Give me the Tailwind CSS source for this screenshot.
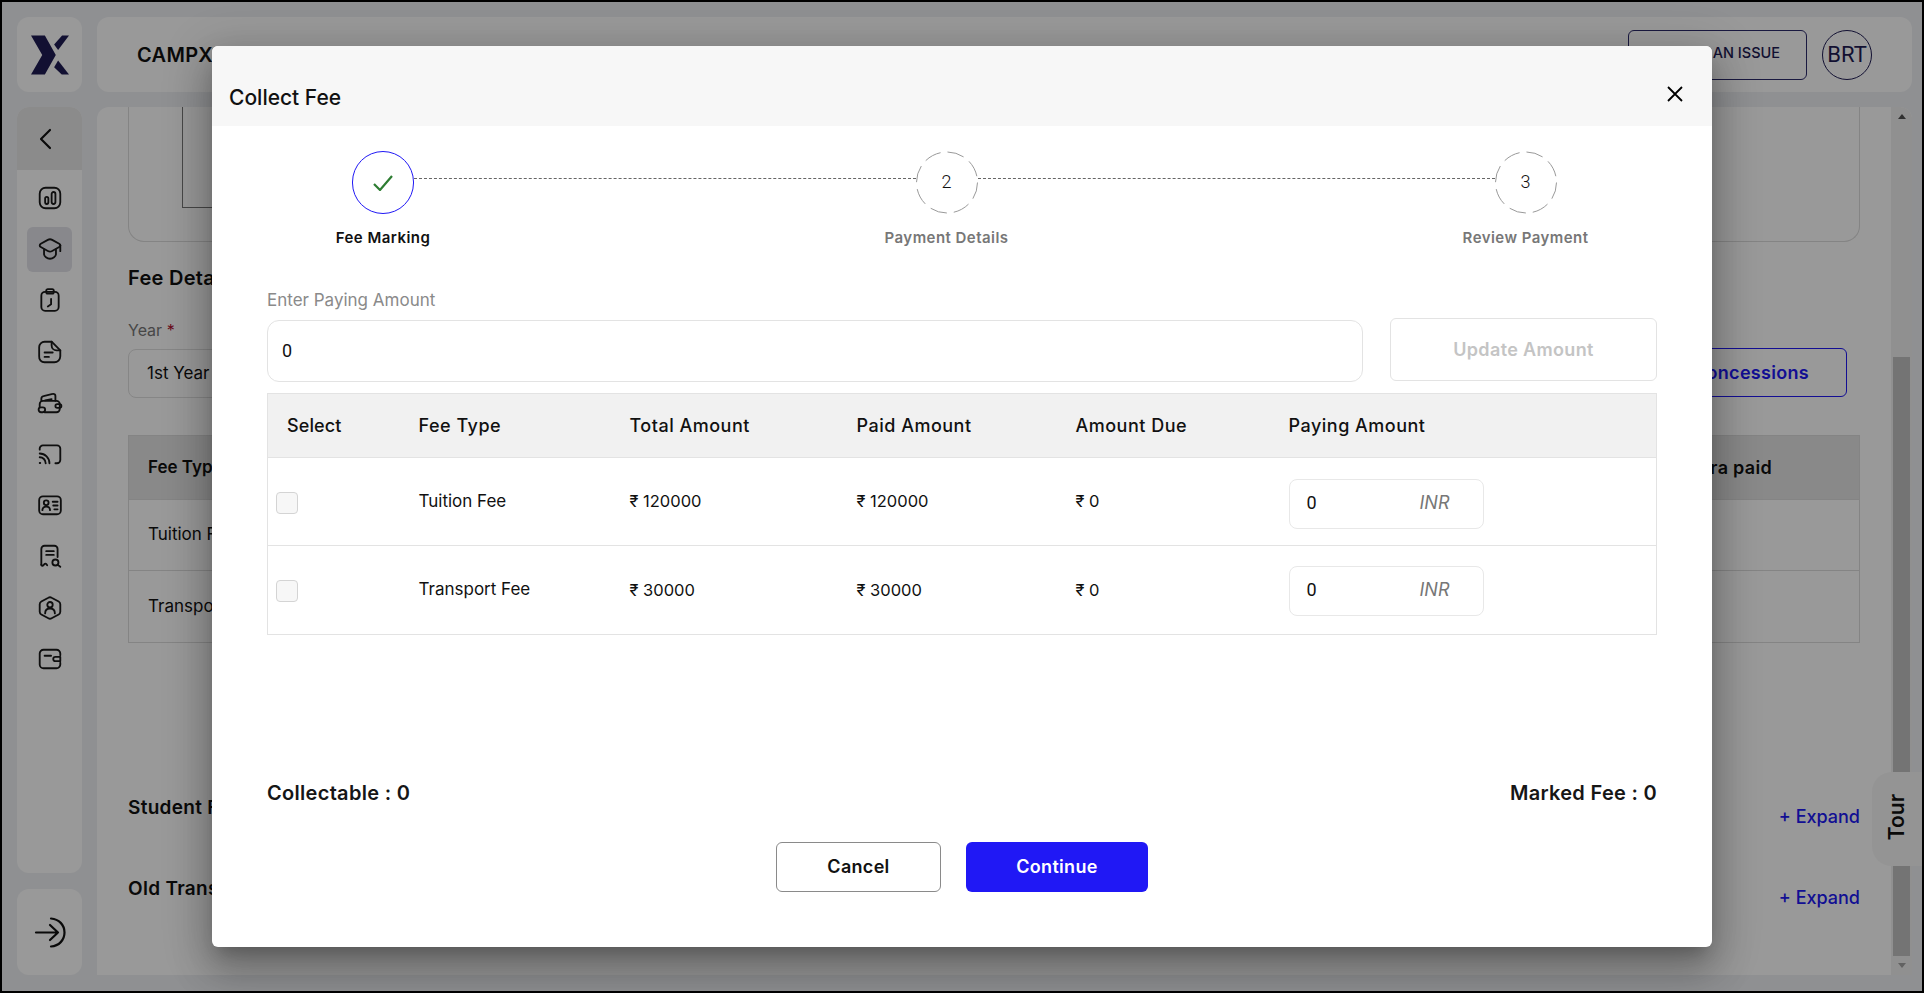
<!DOCTYPE html>
<html lang="en">

<head>
    <meta charset="UTF-8">
    <title>Collect Fee</title>
    <script src="https://cdn.jsdelivr.net/npm/@tailwindcss/browser@4"></script>
</head>

<body class="font-['Inter',sans-serif]">
    <div class="relative w-[1924px] h-[993px] overflow-hidden border-2 border-black bg-[#eff1f4] box-border">
        <div class="grid grid-cols-[65px_1815px] grid-rows-[75px_868px] gap-x-[15px] gap-y-[15px] pl-[15px] pt-[15px]">

            <!-- logo -->
            <div class="bg-white rounded-xl flex items-center justify-center">
                <svg class="w-[38px] h-[40px]" viewBox="0 0 115 118" fill="#1f1c54">
                    <polygon points="0,0 42,0 75,59 42,118 0,118 34,59" />
                    <polygon points="70,27 94,0 115,0 82,44" />
                    <polygon points="82,76 115,118 93,118 70,96" />
                </svg>
            </div>

            <!-- top bar -->
            <div class="bg-white rounded-xl flex items-center justify-between pl-[40px] pr-[40px]">
                <span class="text-[20px] font-semibold text-[#121212] tracking-[0.3px]">CAMPX</span>
                <div class="flex items-center gap-[15px]">
                    <button class="w-[179px] h-[50px] border border-[#2c2a6b] rounded-md text-[14.500px] font-medium text-[#1f1c54] text-right pr-[26px] pb-[3px] whitespace-nowrap">REPORT AN ISSUE</button>
                    <div class="w-[50px] h-[50px] rounded-full border border-[#1f1c54] flex items-center justify-center text-[22px] font-['Roboto',sans-serif] text-[#1f1c54]">BRT</div>
                </div>
            </div>

            <!-- sidebar -->
            <div class="flex flex-col gap-[16px] h-[868px]">
                <div class="bg-white rounded-xl flex-1 overflow-hidden">
                    <div class="h-[63px] bg-[#e8e8e8] flex items-center pl-[21px]">
                        <svg class="w-[14px] h-[22px]" viewBox="0 0 14 22" fill="none" stroke="#111" stroke-width="2.200" stroke-linecap="round" stroke-linejoin="round"><path d="M12 2 3 11l9 9" /></svg>
                    </div>
                    <div class="flex flex-col items-center gap-[6.200px] pt-[5.500px] text-[#1a1a1a]">
                        <div class="w-[45px] h-[45px] flex items-center justify-center">
                            <svg class="w-[26px] h-[26px]" viewBox="0 0 24 24" fill="none" stroke="currentColor" stroke-width="1.700"><rect x="2.500" y="2.500" width="19" height="19" rx="5.500" /><rect x="7.500" y="11" width="3" height="6.500" rx="1.500" /><rect x="13.500" y="6.500" width="3.500" height="11" rx="1.750" /></svg>
                        </div>
                        <div class="w-[45px] h-[45px] rounded-md bg-[#e3e3ea] flex items-center justify-center">
                            <svg class="w-[26px] h-[26px]" viewBox="0 0 24 24" fill="none" stroke="currentColor" stroke-width="1.700" stroke-linecap="round" stroke-linejoin="round"><path d="M10 3.600a4 4 0 0 1 4 0l6.500 3.600c1.300.8 1.300 2.300 0 3l-6.500 3.600a4 4 0 0 1-4 0L3.500 10.200c-1.300-.7-1.300-2.200 0-3z" /><path d="M6.500 12.500v4c0 2.500 2.800 4.500 5.500 4.500s5.500-2 5.500-4.500v-4" /><path d="M21.500 8.500v5.500" /></svg>
                        </div>
                        <div class="w-[45px] h-[45px] flex items-center justify-center">
                            <svg class="w-[26px] h-[26px]" viewBox="0 0 24 24" fill="none" stroke="currentColor" stroke-width="1.700" stroke-linecap="round" stroke-linejoin="round"><rect x="4" y="4.500" width="16" height="17.500" rx="3.500" /><rect x="8.500" y="2" width="7" height="4" rx="1.500" /><path d="M13 11v5l-3 2" /></svg>
                        </div>
                        <div class="w-[45px] h-[45px] flex items-center justify-center">
                            <svg class="w-[26px] h-[26px]" viewBox="0 0 24 24" fill="none" stroke="currentColor" stroke-width="1.700" stroke-linecap="round" stroke-linejoin="round"><path d="M7 2.500h6.500l8 8V16a5.500 5.500 0 0 1-5.500 5.500H7A5 5 0 0 1 2 16V7.500a5 5 0 0 1 5-5z" /><path d="M13.500 2.500V6a4.500 4.500 0 0 0 4.500 4.500h3.500" /><path d="M7 12.500h7.500M7 16.500h4" /></svg>
                        </div>
                        <div class="w-[45px] h-[45px] flex items-center justify-center">
                            <svg class="w-[26px] h-[26px]" viewBox="0 0 24 24" fill="none" stroke="currentColor" stroke-width="1.700" stroke-linecap="round" stroke-linejoin="round"><path d="M7 20.500h11a3 3 0 0 0 3-3v-4.500a3 3 0 0 0-3-3H5.500A3 3 0 0 0 2.500 13v3" /><path d="M4 10V8a2.500 2.500 0 0 1 2-2.400l8.500-2a2 2 0 0 1 2.500 2V10" /><path d="M7.500 9.500l6-1" /><rect x="1.500" y="16" width="6" height="4.500" rx="2.200" /><rect x="17" y="13" width="5.500" height="3.500" rx="1.700" /></svg>
                        </div>
                        <div class="w-[45px] h-[45px] flex items-center justify-center">
                            <svg class="w-[26px] h-[26px]" viewBox="0 0 24 24" fill="none" stroke="currentColor" stroke-width="1.700" stroke-linecap="round" stroke-linejoin="round"><path d="M2.500 8V7a3 3 0 0 1 3-3H18.500a3 3 0 0 1 3 3v10.500a3 3 0 0 1-3 3H17" /><path d="M2.500 11.500a9 9 0 0 1 9 9M2.500 15a5.500 5.500 0 0 1 5.500 5.500M2.500 20.300h.5" /></svg>
                        </div>
                        <div class="w-[45px] h-[45px] flex items-center justify-center">
                            <svg class="w-[26px] h-[26px]" viewBox="0 0 24 24" fill="none" stroke="currentColor" stroke-width="1.700" stroke-linecap="round" stroke-linejoin="round"><rect x="2" y="4" width="20" height="16.500" rx="3.500" /><circle cx="8.500" cy="10" r="2.200" /><path d="M5 16.800c0-2.300 1.500-3.300 3.500-3.300s3.500 1 3.500 3.300" /><path d="M14.500 9h4.500M15 12.500h4M16 16h3" /></svg>
                        </div>
                        <div class="w-[45px] h-[45px] flex items-center justify-center">
                            <svg class="w-[26px] h-[26px]" viewBox="0 0 24 24" fill="none" stroke="currentColor" stroke-width="1.700" stroke-linecap="round" stroke-linejoin="round"><path d="M4 20V5.500a3 3 0 0 1 3-3h9a3 3 0 0 1 3 3V13" /><path d="M4 20c0 1.200 1.300 1.300 2 .5l.8-1c.5-.6 1.300-.6 1.800 0l.8 1" /><path d="M8.500 7.500h7M8.500 11h7" /><circle cx="17" cy="18" r="2.800" /><path d="M19.200 20.200 21.500 22" /></svg>
                        </div>
                        <div class="w-[45px] h-[45px] flex items-center justify-center">
                            <svg class="w-[26px] h-[26px]" viewBox="0 0 24 24" fill="none" stroke="currentColor" stroke-width="1.700" stroke-linecap="round" stroke-linejoin="round"><path d="M10.500 2.500a3 3 0 0 1 3 0l6.500 3.500a3 3 0 0 1 1.500 2.500v7a3 3 0 0 1-1.500 2.500l-6.500 3.500a3 3 0 0 1-3 0L4 18a3 3 0 0 1-1.500-2.500v-7A3 3 0 0 1 4 6z" /><circle cx="12" cy="9" r="2.500" /><path d="M7.500 17c0-3 2-4.500 4.500-4.500s4.500 1.500 4.500 4.500" /></svg>
                        </div>
                        <div class="w-[45px] h-[45px] flex items-center justify-center">
                            <svg class="w-[26px] h-[26px]" viewBox="0 0 24 24" fill="none" stroke="currentColor" stroke-width="1.700" stroke-linecap="round" stroke-linejoin="round"><path d="M21.500 8.500V7a3.500 3.500 0 0 0-3.500-3.500H6A3.500 3.500 0 0 0 2.500 7v10A3.500 3.500 0 0 0 6 20.500h12a3.500 3.500 0 0 0 3.500-3.500v-1.500" /><path d="M17 10h4.500v4H17a2 2 0 0 1 0-4z" /><path d="M7 9h6" /></svg>
                        </div>
                    </div>
                </div>
                <div class="bg-white rounded-xl h-[86px] flex items-center justify-center">
                    <svg class="w-[32px] h-[31px]" viewBox="0 0 32 31" fill="none" stroke="#111" stroke-width="2.200" stroke-linecap="round" stroke-linejoin="round"><path d="M2 15.500h22M16 8l8 7.500L16 23" /><path d="M17 1.500c8 .5 13.500 6.500 13.500 14S25 29 17 29.500" /></svg>
                </div>
            </div>

            <!-- main content -->
            <div class="relative bg-white rounded-t-xl overflow-hidden flex h-[868px]">
                <div class="flex-1 px-[31px]">
                    <div class="h-[135px] rounded-b-2xl border border-t-0 border-[#dcdcdc]">
                        <div class="ml-[53px] h-[101px] w-[900px] border-l border-b border-[#777]"></div>
                    </div>
                    <h2 class="mt-[21px] text-[20px] leading-[30px] font-semibold text-[#121212] tracking-[0.3px]">Fee Details</h2>
                    <div class="mt-[25px] flex items-end justify-between">
                        <div>
                            <label class="block text-[16px] leading-[24px] text-[#777]">Year <span class="text-[#b01030]">*</span></label>
                            <div class="mt-[7px] w-[300px] h-[49px] border border-[#e0e0e0] rounded-lg flex items-center pl-[18px] text-[17px] text-[#111]">1st Year</div>
                        </div>
                        <button class="mr-[13px] mb-[1px] w-[200px] h-[49px] border border-[#2018f5] rounded-md text-[18px] font-semibold text-[#2018f5] text-right pr-[37px] tracking-[0.3px]">Concessions</button>
                    </div>
                    <div class="mt-[37px] border border-[#dcdcdc]">
                        <div class="h-[64px] bg-[#e5e5e5] border-b border-[#dcdcdc] flex items-center justify-between pl-[19px] pr-[87px] text-[17px] font-semibold text-[#111]">
                            <span>Fee Type</span><span class="text-[18px] tracking-[0.3px]">Extra paid</span>
                        </div>
                        <div class="h-[71px] border-b border-[#dcdcdc] flex items-center pl-[19px] text-[17px] text-[#111]">Tuition Fee</div>
                        <div class="h-[71px] flex items-center pl-[19px] text-[17px] text-[#111]">Transport Fee</div>
                    </div>
                    <div class="mt-[150px] flex justify-between items-start">
                        <h3 class="text-[19px] leading-[30px] font-semibold text-[#121212] tracking-[0.3px]">Student Fee</h3>
                        <span class="mt-[9px] text-[18px] leading-[30px] font-medium text-[#2018f5]">+ Expand</span>
                    </div>
                    <div class="mt-[42px] flex justify-between items-start">
                        <h3 class="text-[19px] leading-[30px] font-semibold text-[#121212] tracking-[0.3px]">Old Transactions</h3>
                        <span class="mt-[9px] text-[18px] leading-[30px] font-medium text-[#2018f5]">+ Expand</span>
                    </div>
                </div>
                <!-- scrollbar -->
                <div class="w-[21px] bg-[#f1f1f1] flex flex-col items-center justify-between py-[7px]">
                    <div class="w-0 h-0 border-x-[4px] border-x-transparent border-b-[5px] border-b-[#505050]"></div>
                    <div class="w-[17px] h-[599px] mt-[231px] bg-[#c1c1c1]"></div>
                    <div class="w-0 h-0 border-x-[4px] border-x-transparent border-t-[5px] border-t-[#a3a3a3]"></div>
                </div>
            </div>
        </div>

        <!-- tour tab -->
        <div class="absolute right-0 top-[770px] w-[50px] h-[94px] bg-[#f7f7f7] rounded-l-[20px] flex items-center justify-center">
            <span class="[writing-mode:vertical-rl] rotate-180 text-[21px] font-semibold text-[#111] mb-[4px]">Tour</span>
        </div>

        <!-- modal overlay -->
        <div class="absolute inset-0 bg-black/40 flex items-center justify-center">
            <div class="w-[1500px] h-[901px] bg-white rounded-md overflow-hidden flex flex-col shadow-[0_11px_15px_-7px_rgba(0,0,0,0.2),0_24px_38px_3px_rgba(0,0,0,0.2),0_9px_46px_8px_rgba(0,0,0,0.16)]">
                <div class="h-[80px] bg-[#f7f7f7] flex items-start justify-between pl-[17px] pr-[29px] shrink-0">
                    <h1 class="mt-[36px] text-[21px] leading-[32px] font-medium text-[#111]">Collect Fee</h1>
                    <svg class="mt-[40px] w-[16px] h-[16px]" viewBox="0 0 16 16" fill="none" stroke="#000" stroke-width="1.800"><path d="M1 1l14 14M15 1 1 15" /></svg>
                </div>

                <!-- stepper -->
                <div class="relative flex justify-between px-[124px] pt-[25px]">
                    <div class="absolute left-[202px] top-[52px] w-[502px] border-t border-dashed border-[#666]"></div>
                    <div class="absolute left-[766px] top-[52px] w-[517px] border-t border-dashed border-[#666]"></div>
                    <div class="w-[94px] flex flex-col items-center">
                        <div class="w-[62px] h-[63px] rounded-full border border-[#2018f5] flex items-center justify-center bg-white">
                            <svg class="w-[20px] h-[16px]" viewBox="0 0 20 16" fill="none" stroke="#2e7d32" stroke-width="2.200"><path d="M1 9l6 6L19 1" /></svg>
                        </div>
                        <span class="mt-[14px] text-[15px] leading-[20px] font-semibold text-[#111] whitespace-nowrap tracking-[0.45px]">Fee Marking</span>
                    </div>
                    <div class="w-[123px] flex flex-col items-center">
                        <div class="relative w-[62px] h-[63px] flex items-center justify-center bg-white">
                            <svg class="absolute inset-0 w-[62px] h-[63px]" viewBox="0 0 62 63" fill="none" stroke="#999"><circle cx="31" cy="31.500" r="30.500" stroke-dasharray="17 7" /></svg>
                            <span class="text-[18px] text-[#111] font-['Roboto',sans-serif] font-light pb-[2px]">2</span>
                        </div>
                        <span class="mt-[14px] text-[15px] leading-[20px] font-semibold text-[#777] whitespace-nowrap tracking-[0.45px]">Payment Details</span>
                    </div>
                    <div class="w-[125px] flex flex-col items-center">
                        <div class="relative w-[62px] h-[63px] flex items-center justify-center bg-white">
                            <svg class="absolute inset-0 w-[62px] h-[63px]" viewBox="0 0 62 63" fill="none" stroke="#999"><circle cx="31" cy="31.500" r="30.500" stroke-dasharray="17 7" /></svg>
                            <span class="text-[18px] text-[#111] font-['Roboto',sans-serif] font-light pb-[2px]">3</span>
                        </div>
                        <span class="mt-[14px] text-[15px] leading-[20px] font-semibold text-[#777] whitespace-nowrap tracking-[0.45px]">Review Payment</span>
                    </div>
                </div>

                <div class="px-[55px]">
                    <label class="block mt-[40px] text-[17px] leading-[24px] text-[#8a8a8a]">Enter Paying Amount</label>
                    <div class="mt-[6px] flex items-start justify-between">
                        <div class="mt-[2px] w-[1096px] h-[62px] border border-[#e3e3e3] rounded-xl flex items-center pl-[14px] pb-[2px] text-[18px] text-[#111] font-['Roboto',sans-serif]">0</div>
                        <button class="w-[267px] h-[63px] border border-[#e3e3e3] rounded-md text-[18px] font-semibold text-[#c4c4c4] tracking-[0.35px]">Update Amount</button>
                    </div>

                    <table class="mt-[11px] w-[1390px] table-fixed border-collapse border border-[#e3e3e3] text-[#111]">
                        <thead>
                            <tr class="h-[64px] bg-[#f1f1f1] border-b border-[#e3e3e3] text-[18px] text-left tracking-[0.5px]">
                                <th class="w-[151px] pl-[19px] font-medium tracking-[0.1px]">Select</th>
                                <th class="w-[211px] font-medium">Fee Type</th>
                                <th class="w-[227px] font-medium">Total Amount</th>
                                <th class="w-[219px] font-medium">Paid Amount</th>
                                <th class="w-[213px] font-medium">Amount Due</th>
                                <th class="font-medium">Paying Amount</th>
                            </tr>
                        </thead>
                        <tbody class="text-[17px]">
                            <tr class="h-[88px] border-b border-[#e3e3e3]">
                                <td class="pl-[8px]"><div class="w-[22px] h-[22px] mt-[3px] rounded bg-[#f7f7f7] border border-[#d4d4d4]"></div></td>
                                <td>Tuition Fee</td>
                                <td class="text-[16.500px]">₹ 120000</td>
                                <td class="text-[16.500px]">₹ 120000</td>
                                <td class="text-[16.500px]">₹ 0</td>
                                <td>
                                    <div class="mt-[4px] w-[195px] h-[50px] border border-[#e8e8e8] rounded-lg flex items-center justify-between pl-[17px] pr-[33px] pb-[3px]"><span class="text-[18px] font-['Roboto',sans-serif]">0</span><span class="italic text-[18px] text-[#777]">INR</span></div>
                                </td>
                            </tr>
                            <tr class="h-[89px]">
                                <td class="pl-[8px]"><div class="w-[22px] h-[22px] mt-[2px] rounded bg-[#f7f7f7] border border-[#d4d4d4]"></div></td>
                                <td>Transport Fee</td>
                                <td class="text-[16.500px]">₹ 30000</td>
                                <td class="text-[16.500px]">₹ 30000</td>
                                <td class="text-[16.500px]">₹ 0</td>
                                <td>
                                    <div class="mt-[1px] w-[195px] h-[50px] border border-[#e8e8e8] rounded-lg flex items-center justify-between pl-[17px] pr-[33px] pb-[3px]"><span class="text-[18px] font-['Roboto',sans-serif]">0</span><span class="italic text-[18px] text-[#777]">INR</span></div>
                                </td>
                            </tr>
                        </tbody>
                    </table>

                    <div class="mt-[144px] flex justify-between text-[20px] leading-[28px] font-semibold text-[#161616] tracking-[0.3px]">
                        <span>Collectable : 0</span>
                        <span>Marked Fee : 0</span>
                    </div>
                    <div class="mt-[35px] flex justify-center gap-[25px]">
                        <button class="w-[165px] h-[50px] border border-[#8a8a8a] rounded-md text-[18px] font-semibold text-[#111] tracking-[0.3px] pb-[2px]">Cancel</button>
                        <button class="w-[182px] h-[50px] bg-[#2018f5] rounded-md text-[18px] font-semibold text-white tracking-[0.3px] pb-[2px]">Continue</button>
                    </div>
                </div>
            </div>
        </div>
    </div>
</body>

</html>
